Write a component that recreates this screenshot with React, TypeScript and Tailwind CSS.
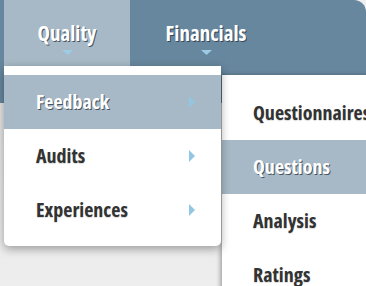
import React from "react";

const font: React.CSSProperties = { fontFamily: '"Open Sans", "DejaVu Sans Condensed", sans-serif', fontStretch: "75%" };

function RightArrow() {
  return (
    <svg width="6" height="12" viewBox="0 0 6 12" className="block">
      <polygon points="0,0 6,6 0,12" fill="#93c6e2" />
    </svg>
  );
}

function DownArrow() {
  return (
    <svg width="11" height="5" viewBox="0 0 11 5" className="block">
      <polygon points="0,0 11,0 5.5,5" fill="#9ccbe5" />
    </svg>
  );
}

const whiteText = { textShadow: "1px 1px 0 rgba(40,50,60,0.75)" };
const darkText = { textShadow: "0 1px 1px rgba(0,0,0,0.15)" };

export default function App() {
  const menu1 = [
    { label: "Feedback", active: true },
    { label: "Audits", active: false },
    { label: "Experiences", active: false },
  ];
  const menu2 = [
    { label: "Questionnaires", active: false },
    { label: "Questions", active: true },
    { label: "Analysis", active: false },
    { label: "Ratings", active: false },
  ];
  return (
    <div className="relative w-[366px] h-[286px] overflow-hidden bg-[#efefef]" style={font}>
      <div className="flex h-[103px] bg-[#67879e] rounded-tr-[12px] pl-[4px]">
        <div className="w-[126px] bg-[#a7b9c6] flex flex-col items-center pt-[19px]">
          <span className="text-[21px] leading-[28px] font-bold text-white" style={whiteText}>Quality</span>
          <div className="mt-[3px]"><DownArrow /></div>
        </div>
        <div className="w-[152px] flex flex-col items-center pt-[19px]">
          <span className="text-[21px] leading-[28px] font-bold text-white" style={whiteText}>Financials</span>
          <div className="mt-[3px]"><DownArrow /></div>
        </div>
      </div>
      <div className="h-full bg-gradient-to-b from-[#e4e4e4] to-[#f4f4f4]" />

      {/* second-level dropdown */}
      <div className="absolute left-[222px] top-[75px] w-[170px] h-[240px] bg-white pt-[11px] shadow-[-2px_0_4px_rgba(0,0,0,0.3)]">
        {menu2.map((m) => (
          <div
            key={m.label}
            className={`h-[54px] flex items-center pl-[31px] ${m.active ? "bg-[#a7b9c6]" : ""}`}
          >
            <span
              className={`text-[20px] font-bold whitespace-nowrap ${m.active ? "text-white" : "text-[#333333]"}`}
              style={m.active ? whiteText : darkText}
            >
              {m.label}
            </span>
          </div>
        ))}
      </div>

      {/* first-level dropdown */}
      <div className="absolute left-[4px] top-[66px] w-[217px] h-[180px] bg-white pt-[9px] rounded-b-[5px] shadow-[0_3px_10px_rgba(0,0,0,0.35)]">
        {menu1.map((m) => (
          <div
            key={m.label}
            className={`h-[54px] flex items-center pl-[32px] pr-[26px] justify-between ${m.active ? "bg-[#a7b9c6]" : ""}`}
          >
            <span
              className={`text-[20px] font-bold ${m.active ? "text-white" : "text-[#333333]"}`}
              style={m.active ? whiteText : darkText}
            >
              {m.label}
            </span>
            <RightArrow />
          </div>
        ))}
      </div>
    </div>
  );
}
